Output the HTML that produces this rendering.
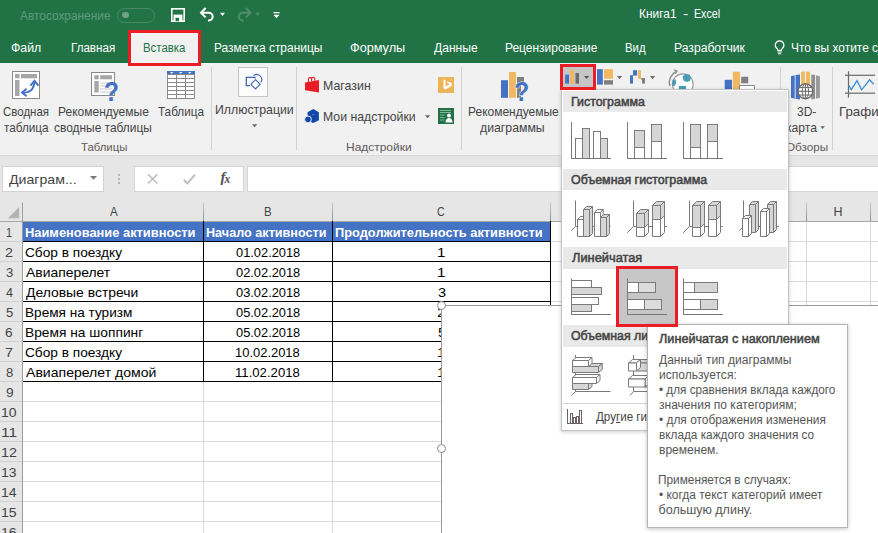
<!DOCTYPE html>
<html><head><meta charset="utf-8"><title>Excel</title>
<style>
html,body{margin:0;padding:0;}
body{width:878px;height:533px;overflow:hidden;background:#fff;font-family:'Liberation Sans',sans-serif;}
#app{position:relative;width:878px;height:533px;overflow:hidden;background:#fff;}
.t{position:absolute;white-space:nowrap;line-height:1;transform-origin:0 50%;font-family:'Liberation Sans',sans-serif;}
.a{position:absolute;}
svg{position:absolute;overflow:visible;}

</style></head>
<body>
<div id="app">
<!-- green title + tabs -->
<div class="a" style="left:0;top:0;width:878px;height:63px;background:#217346"></div>
<!-- ribbon bg -->
<div class="a" style="left:0;top:63px;width:878px;height:92px;background:#f1f1f1"></div>
<div class="a" style="left:0;top:155px;width:878px;height:1px;background:#d9d9d9"></div>
<!-- formula bar area -->
<div class="a" style="left:0;top:156px;width:878px;height:46px;background:#e6e6e6"></div>
<!-- active tab -->
<div class="a" style="left:129px;top:31px;width:71px;height:32px;background:#f1f1f1"></div>
<!-- autosave toggle -->
<div class="a" style="left:117px;top:8px;width:36px;height:13px;border:1px solid #4a8868;border-radius:8px"></div>
<div class="a" style="left:122px;top:11.500px;width:6.500px;height:6.500px;border-radius:50%;background:#6fa387"></div>
<!-- save icon -->
<svg style="left:0;top:0" width="300" height="30" viewBox="0 0 300 30"><rect x="171.800" y="8.800" width="12.400" height="12.400" fill="none" stroke="#fff" stroke-width="1.600"/><rect x="173.500" y="14.600" width="9" height="6.500" fill="#fff"/><rect x="175.500" y="17.800" width="3.500" height="3.400" fill="#217346"/></svg>
<!-- undo -->
<svg style="left:0;top:0" width="300" height="30" viewBox="0 0 300 30"><path d="M202 12.700h6.800a3.900 3.900 0 0 1 0 7.800H208" fill="none" stroke="#fff" stroke-width="2"/><path d="M205.600 8L201 12.700l4.600 4.700" fill="none" stroke="#fff" stroke-width="2"/><path d="M220 12.700h5l-2.500 3.300z" fill="#fff"/></svg>
<!-- redo (disabled) -->
<svg style="left:0;top:0" width="300" height="30" viewBox="0 0 300 30"><path d="M249.500 12.700h-6.800a3.900 3.900 0 0 0 0 7.800H243.500" fill="none" stroke="#4f8d6c" stroke-width="2"/><path d="M246 8l4.600 4.700-4.600 4.700" fill="none" stroke="#4f8d6c" stroke-width="2"/><path d="M255 12.700h5l-2.500 3.300z" fill="#4f8d6c"/></svg>
<!-- customize QAT -->
<svg style="left:0;top:0" width="300" height="30" viewBox="0 0 300 30"><rect x="273.500" y="12" width="6" height="1.300" fill="#fff"/><path d="M273.500 14.800h6l-3 3.400z" fill="#fff"/></svg>
<!-- lightbulb -->
<svg style="left:0;top:0" width="878" height="63" viewBox="0 0 878 63"><path d="M779.600 40.900a4.300 4.300 0 0 0-2.500 7.800c.5.500.7 1 .7 1.700h3.600c0-.7.200-1.200.7-1.700a4.300 4.300 0 0 0-2.500-7.800z" fill="none" stroke="#fff" stroke-width="1.150"/><path d="M777.500 52h4.200M778 53.800h3.200" stroke="#fff" stroke-width="1.100"/></svg>

<!-- ribbon separators -->
<div class="a" style="left:211px;top:67px;width:1px;height:83px;background:#d2d2d2"></div>
<div class="a" style="left:296px;top:67px;width:1px;height:83px;background:#d2d2d2"></div>
<div class="a" style="left:461px;top:67px;width:1px;height:83px;background:#d2d2d2"></div>
<div class="a" style="left:780px;top:67px;width:1px;height:83px;background:#d2d2d2"></div>
<div class="a" style="left:832px;top:67px;width:1px;height:83px;background:#d2d2d2"></div>

<!-- ICONS placeholder: ribbon -->
<svg style="left:0;top:0" width="878" height="533" viewBox="0 0 878 533"><rect x="12.50" y="71.50" width="27.00" height="27.00" fill="#fff" stroke="#8a8a8a" stroke-width="1"/>
<rect x="15.00" y="74.00" width="4.50" height="4.30" fill="#a6a6a6"/>
<rect x="15.00" y="80.00" width="4.50" height="16.00" fill="#a6a6a6"/>
<rect x="21.00" y="74.00" width="16.00" height="4.30" fill="#a6a6a6"/>
<path d="M23 92.600c6 0.600 11-2.600 11.400-11" fill="none" stroke="#4472c4" stroke-width="1.900"/>
<path d="M26.600 88.800l-4.600 3.800 4.600 3.700" fill="none" stroke="#4472c4" stroke-width="1.900"/>
<path d="M30.400 85.600l4.100-4.800 3.900 4.900" fill="none" stroke="#4472c4" stroke-width="1.900"/>
<rect x="91.50" y="72.50" width="23.00" height="23.00" fill="#fff" stroke="#8a8a8a" stroke-width="1"/>
<rect x="94.30" y="75.20" width="4.40" height="4.10" fill="#a6a6a6"/>
<rect x="94.30" y="81.00" width="4.40" height="11.50" fill="#a6a6a6"/>
<rect x="100.20" y="75.20" width="11.80" height="4.10" fill="#a6a6a6"/>
<path d="M100.20 83.00L112.00 83.00" stroke="#c8c8c8" stroke-width="1" fill="none"/>
<path d="M100.20 86.00L112.00 86.00" stroke="#c8c8c8" stroke-width="1" fill="none"/>
<path d="M100.20 89.00L112.00 89.00" stroke="#c8c8c8" stroke-width="1" fill="none"/>
<path d="M100.20 92.00L112.00 92.00" stroke="#c8c8c8" stroke-width="1" fill="none"/>
<text transform="translate(104 100.700) scale(0.860 1)" font-family="Liberation Sans" font-weight="700" font-size="28.500" fill="#4472c4">?</text>
<rect x="167.00" y="71.00" width="28.00" height="4.00" fill="#4472c4"/>
<rect x="167.50" y="74.50" width="27.00" height="24.00" fill="#fff" stroke="#8a8a8a" stroke-width="1"/>
<path d="M167.50 78.50L194.50 78.50" stroke="#8a8a8a" stroke-width="1" fill="none"/>
<path d="M167.50 82.50L194.50 82.50" stroke="#8a8a8a" stroke-width="1" fill="none"/>
<path d="M167.50 86.50L194.50 86.50" stroke="#8a8a8a" stroke-width="1" fill="none"/>
<path d="M167.50 90.50L194.50 90.50" stroke="#8a8a8a" stroke-width="1" fill="none"/>
<path d="M167.50 94.50L194.50 94.50" stroke="#8a8a8a" stroke-width="1" fill="none"/>
<path d="M176.50 74.50L176.50 98.50" stroke="#8a8a8a" stroke-width="1" fill="none"/>
<path d="M185.50 74.50L185.50 98.50" stroke="#8a8a8a" stroke-width="1" fill="none"/>
<path d="M170.1 72h3.200l-1.600 1.800z" fill="#fff"/>
<path d="M179.1 72h3.200l-1.600 1.800z" fill="#fff"/>
<path d="M188.1 72h3.200l-1.600 1.800z" fill="#fff"/>
<rect x="238.50" y="67.50" width="29.00" height="29.00" fill="#fcfcfc" stroke="#c4c4c4" stroke-width="1"/>
<path d="M255 78.600V77.300H246.300V85.600H250" fill="none" stroke="#3c65b5" stroke-width="1.300"/>
<path d="M253.500 75.700A5 5 0 0 1 260.800 82.400" fill="none" stroke="#3c65b5" stroke-width="1.100"/>
<path d="M255.500 79.700l4.600 4.600-4.600 4.600-4.600-4.600z" fill="none" stroke="#3c65b5" stroke-width="1.100"/>
<path d="M252.100 124.200h5.200l-2.600 3z" fill="#666"/>
<path d="M305 82.600L319 79.900V92.500L305 90.300z" fill="#e81c24"/>
<path d="M308.400 82v-2.800a1.600 1.600 0 0 1 3.200 0v2M311.600 81v-2.200a1.600 1.600 0 0 1 3.200 0v2" fill="none" stroke="#e81c24" stroke-width="1.100"/>
<path d="M313.200 108.900L318.900 112.300V120.200L313.200 123L307.600 120.200V112.300z" fill="#1047a9"/>
<circle cx="308" cy="119.400" r="3.400" fill="#1047a9" stroke="#f1f1f1" stroke-width="1"/>
<rect x="312.600" y="113.900" width="1.300" height="1.300" fill="#6f93d0"/>
<path d="M425 115.300h5.200l-2.600 3z" fill="#666"/>
<rect x="438.00" y="77.00" width="16.00" height="16.00" fill="#f0b458"/>
<path d="M443.500 79.500l2 .8v6.200l4.500-2.300-2.300-1-.9-2 5 1.800v2.800l-6.300 3.700-2-1.300z" fill="#fff"/>
<rect x="438.00" y="108.00" width="16.00" height="16.00" fill="#217346"/>
<circle cx="449" cy="115.500" r="2" fill="#fff"/><path d="M445.500 122.500c0-3 1.500-4.500 3.500-4.500s3.500 1.500 3.500 4.500z" fill="#fff"/>
<path d="M440.00 110.50L451.00 110.50" stroke="#9fc5ae" stroke-width="0.8" fill="none"/>
<path d="M440.00 112.50L451.00 112.50" stroke="#9fc5ae" stroke-width="0.8" fill="none"/>
<path d="M440.00 115.00L444.50 115.00" stroke="#9fc5ae" stroke-width="0.8" fill="none"/>
<path d="M440.00 117.50L444.50 117.50" stroke="#9fc5ae" stroke-width="0.8" fill="none"/>
<path d="M440.00 120.00L444.50 120.00" stroke="#9fc5ae" stroke-width="0.8" fill="none"/>
<rect x="501.00" y="80.20" width="7.00" height="17.60" fill="#4472c4"/>
<rect x="509.00" y="72.00" width="7.00" height="25.80" fill="#f0b860"/>
<rect x="517.00" y="77.00" width="7.00" height="5.00" fill="#7f7f7f"/>
<rect x="517.00" y="82.00" width="4.00" height="15.80" fill="#7f7f7f"/>
<text transform="translate(514.300 100.700) scale(0.860 1)" font-family="Liberation Sans" font-weight="700" font-size="28.500" fill="#4472c4" stroke="#f1f1f1" stroke-width="0.900" paint-order="stroke">?</text>
<rect x="561.50" y="65.50" width="33.00" height="23.00" fill="#c6c6c6"/>
<rect x="565.20" y="74.60" width="3.80" height="9.00" fill="#4472c4"/>
<rect x="570.20" y="69.80" width="3.80" height="13.80" fill="#f0b860"/>
<rect x="575.50" y="73.00" width="3.50" height="10.60" fill="#6b6b6b"/>
<path d="M584 76h5.200l-2.600 3z" fill="#555"/>
<rect x="597.00" y="69.20" width="5.80" height="15.40" fill="#4472c4"/>
<rect x="604.00" y="69.20" width="9.00" height="9.50" fill="#f0b860"/>
<rect x="604.00" y="80.20" width="9.00" height="4.40" fill="#7f7f7f"/>
<path d="M617 76h5.200l-2.600 3z" fill="#666"/>
<rect x="630.00" y="75.20" width="3.00" height="8.40" fill="#4472c4"/>
<rect x="633.00" y="70.20" width="4.10" height="5.40" fill="#4472c4"/>
<rect x="638.00" y="70.20" width="3.00" height="8.50" fill="#f0b860"/>
<rect x="641.00" y="78.00" width="4.00" height="1.50" fill="#7f7f7f"/>
<rect x="642.00" y="78.00" width="3.00" height="5.60" fill="#7f7f7f"/>
<path d="M650 76h5.200l-2.600 3z" fill="#666"/>
<circle cx="682.800" cy="84.300" r="10.400" fill="#fff" stroke="#9a9a9a" stroke-width="1.100"/>
<path d="M682.500 76.500l3-2.500 4 .5 1.500 3-1 3.500-3.500 1-3-1.500zM672.500 80l3-.8.800 3.500-1.800 3.500-2-.5zM678.800 86h7.200v3h-7.200z" fill="#4a9db5"/>
<path d="M669.900 86a12.300 12.300 0 0 1 6.300-14.600" fill="none" stroke="#8a8a8a" stroke-width="1.400"/><path d="M673.800 69.800l3.200 1.200-1.600 2.800" fill="none" stroke="#8a8a8a" stroke-width="1.200"/>
<rect x="724.70" y="79.80" width="7.30" height="12.20" fill="#4472c4"/>
<rect x="732.80" y="71.70" width="7.30" height="20.30" fill="#f0b860"/>
<rect x="741.20" y="76.80" width="7.00" height="6.50" fill="#7f7f7f"/>
<rect x="739.50" y="85.50" width="15.00" height="7.50" fill="#fff" stroke="#8a8a8a" stroke-width="1"/>
<path d="M791 76.200l3.700-1v23.600l-3.700-1z" fill="#4472c4"/><path d="M795.600 75l4.400-.6v25l-4.400-.6z" fill="#4472c4"/>
<path d="M801.100 72l3.800-.7v20h-3.800z" fill="#f0b860"/><path d="M806 71.300l4 .7v20h-4z" fill="#f0b860"/>
<path d="M811.300 74.400l3.700.6v23.800l-3.700.6z" fill="#8f8f8f"/><path d="M815.900 75.200l4 1v21.600l-4 1z" fill="#9a9a9a"/>
<circle cx="805.400" cy="91.300" r="7.400" fill="#fff" stroke="#6a6a6a" stroke-width="1.400"/>
<ellipse cx="805.400" cy="91.300" rx="3.200" ry="7.400" fill="none" stroke="#6a6a6a" stroke-width="1"/>
<path d="M805.40 84.00L805.40 98.70" stroke="#6a6a6a" stroke-width="1" fill="none"/>
<path d="M798.00 91.30L812.80 91.30" stroke="#6a6a6a" stroke-width="1.1" fill="none"/>
<path d="M799.200 87.600h12.400M799.200 95h12.400" stroke="#6a6a6a" stroke-width="1" fill="none"/>
<path d="M820.300 126.200h4.600l-2.300 2.700z" fill="#666"/>
<path d="M848.50 71.30L848.50 97.70" stroke="#6a6a6a" stroke-width="1.2" fill="none"/>
<path d="M845.00 75.30L875.00 75.30" stroke="#6a6a6a" stroke-width="1.2" fill="none"/>
<path d="M845.00 93.20L875.00 93.20" stroke="#6a6a6a" stroke-width="1.2" fill="none"/>
<path d="M848.800 85.400l2.400 4.300 5.800-9.100 4.600 9.300 8-10.100 4.100 4.500" fill="none" stroke="#3a8fd6" stroke-width="1.300"/></svg>

<!-- formula bar -->
<div class="a" style="left:2px;top:166px;width:100px;height:24px;background:#fff;border:1px solid #d2d2d2"></div>
<svg style="left:90px;top:176.300px" width="8" height="5"><path d="M0 0h7L3.500 3.800z" fill="#777"/></svg>
<div class="a" style="left:118.400px;top:174px;width:1.800px;height:1.800px;background:#b5b5b5"></div>
<div class="a" style="left:118.400px;top:178.200px;width:1.800px;height:1.800px;background:#b5b5b5"></div>
<div class="a" style="left:118.400px;top:182.400px;width:1.800px;height:1.800px;background:#b5b5b5"></div>
<div class="a" style="left:134px;top:166px;width:108px;height:24px;background:#fff;border:1px solid #d6d6d6"></div>
<svg style="left:0;top:0" width="300" height="200" viewBox="0 0 300 200"><path d="M148 174.300l9.400 9.200M157.400 174.300L148 183.500" stroke="#bdbdbd" stroke-width="1.600" fill="none"/><path d="M183.800 179.800l3.600 3.600L195 174.600" stroke="#c0c0c0" stroke-width="2.100" fill="none"/></svg>
<span class="t" style="left:220.500px;top:170px;font-family:'Liberation Serif',serif;font-style:italic;font-weight:700;font-size:15px;color:#505050">f</span>
<span class="t" style="left:224.500px;top:174px;font-family:'Liberation Serif',serif;font-style:italic;font-weight:700;font-size:11.500px;color:#505050">x</span>
<div class="a" style="left:247px;top:166px;width:640px;height:24px;background:#fff;border:1px solid #d6d6d6"></div>

<!-- column headers -->
<div class="a" style="left:0;top:202px;width:878px;height:19px;background:#e6e6e6"></div>
<svg style="left:8px;top:206.600px" width="12" height="12"><path d="M11.200 0v11.200H0z" fill="#b2b2b2"/></svg>
<!-- grid -->
<div class="a" style="left:0;top:221px;width:22px;height:312px;background:#e6e6e6"></div>
<div class="a" style="left:22px;top:202px;width:1px;height:19px;background:linear-gradient(#d0d0d0,#8c8c8c)"></div>
<div class="a" style="left:203px;top:202px;width:1px;height:19px;background:linear-gradient(#d0d0d0,#8c8c8c)"></div>
<div class="a" style="left:332px;top:202px;width:1px;height:19px;background:linear-gradient(#d0d0d0,#8c8c8c)"></div>
<div class="a" style="left:550px;top:202px;width:1px;height:19px;background:linear-gradient(#d0d0d0,#8c8c8c)"></div>
<div class="a" style="left:614px;top:202px;width:1px;height:19px;background:linear-gradient(#d0d0d0,#8c8c8c)"></div>
<div class="a" style="left:678px;top:202px;width:1px;height:19px;background:linear-gradient(#d0d0d0,#8c8c8c)"></div>
<div class="a" style="left:742px;top:202px;width:1px;height:19px;background:linear-gradient(#d0d0d0,#8c8c8c)"></div>
<div class="a" style="left:806px;top:202px;width:1px;height:19px;background:linear-gradient(#d0d0d0,#8c8c8c)"></div>
<div class="a" style="left:870px;top:202px;width:1px;height:19px;background:linear-gradient(#d0d0d0,#8c8c8c)"></div>
<div class="a" style="left:0;top:221px;width:878px;height:1px;background:#a8a8a8"></div>
<div class="a" style="left:22px;top:203px;width:1px;height:330px;background:#9c9c9c"></div>
<div class="a" style="left:0;top:241px;width:22px;height:1px;background:#cfcfcf"></div>
<div class="a" style="left:23px;top:241px;width:855px;height:1px;background:#d9d9d9"></div>
<div class="a" style="left:0;top:261px;width:22px;height:1px;background:#cfcfcf"></div>
<div class="a" style="left:23px;top:261px;width:855px;height:1px;background:#d9d9d9"></div>
<div class="a" style="left:0;top:281px;width:22px;height:1px;background:#cfcfcf"></div>
<div class="a" style="left:23px;top:281px;width:855px;height:1px;background:#d9d9d9"></div>
<div class="a" style="left:0;top:301px;width:22px;height:1px;background:#cfcfcf"></div>
<div class="a" style="left:23px;top:301px;width:855px;height:1px;background:#d9d9d9"></div>
<div class="a" style="left:0;top:321px;width:22px;height:1px;background:#cfcfcf"></div>
<div class="a" style="left:23px;top:321px;width:855px;height:1px;background:#d9d9d9"></div>
<div class="a" style="left:0;top:341px;width:22px;height:1px;background:#cfcfcf"></div>
<div class="a" style="left:23px;top:341px;width:855px;height:1px;background:#d9d9d9"></div>
<div class="a" style="left:0;top:361px;width:22px;height:1px;background:#cfcfcf"></div>
<div class="a" style="left:23px;top:361px;width:855px;height:1px;background:#d9d9d9"></div>
<div class="a" style="left:0;top:381px;width:22px;height:1px;background:#cfcfcf"></div>
<div class="a" style="left:23px;top:381px;width:855px;height:1px;background:#d9d9d9"></div>
<div class="a" style="left:0;top:401px;width:22px;height:1px;background:#cfcfcf"></div>
<div class="a" style="left:23px;top:401px;width:855px;height:1px;background:#d9d9d9"></div>
<div class="a" style="left:0;top:421px;width:22px;height:1px;background:#cfcfcf"></div>
<div class="a" style="left:23px;top:421px;width:855px;height:1px;background:#d9d9d9"></div>
<div class="a" style="left:0;top:441px;width:22px;height:1px;background:#cfcfcf"></div>
<div class="a" style="left:23px;top:441px;width:855px;height:1px;background:#d9d9d9"></div>
<div class="a" style="left:0;top:461px;width:22px;height:1px;background:#cfcfcf"></div>
<div class="a" style="left:23px;top:461px;width:855px;height:1px;background:#d9d9d9"></div>
<div class="a" style="left:0;top:481px;width:22px;height:1px;background:#cfcfcf"></div>
<div class="a" style="left:23px;top:481px;width:855px;height:1px;background:#d9d9d9"></div>
<div class="a" style="left:0;top:501px;width:22px;height:1px;background:#cfcfcf"></div>
<div class="a" style="left:23px;top:501px;width:855px;height:1px;background:#d9d9d9"></div>
<div class="a" style="left:0;top:521px;width:22px;height:1px;background:#cfcfcf"></div>
<div class="a" style="left:23px;top:521px;width:855px;height:1px;background:#d9d9d9"></div>
<div class="a" style="left:0;top:541px;width:22px;height:1px;background:#cfcfcf"></div>
<div class="a" style="left:23px;top:541px;width:855px;height:1px;background:#d9d9d9"></div>
<div class="a" style="left:203px;top:222px;width:1px;height:311px;background:#d9d9d9"></div>
<div class="a" style="left:332px;top:222px;width:1px;height:311px;background:#d9d9d9"></div>
<div class="a" style="left:550px;top:222px;width:1px;height:311px;background:#d9d9d9"></div>
<div class="a" style="left:614px;top:222px;width:1px;height:311px;background:#d9d9d9"></div>
<div class="a" style="left:678px;top:222px;width:1px;height:311px;background:#d9d9d9"></div>
<div class="a" style="left:742px;top:222px;width:1px;height:311px;background:#d9d9d9"></div>
<div class="a" style="left:806px;top:222px;width:1px;height:311px;background:#d9d9d9"></div>
<div class="a" style="left:870px;top:222px;width:1px;height:311px;background:#d9d9d9"></div>
<div class="a" style="left:23px;top:222px;width:527px;height:19px;background:#4472c4"></div>
<div class="a" style="left:23px;top:241px;width:528px;height:1px;background:#000"></div>
<div class="a" style="left:23px;top:261px;width:528px;height:1px;background:#000"></div>
<div class="a" style="left:23px;top:281px;width:528px;height:1px;background:#000"></div>
<div class="a" style="left:23px;top:301px;width:528px;height:1px;background:#000"></div>
<div class="a" style="left:23px;top:321px;width:528px;height:1px;background:#000"></div>
<div class="a" style="left:23px;top:341px;width:528px;height:1px;background:#000"></div>
<div class="a" style="left:23px;top:361px;width:528px;height:1px;background:#000"></div>
<div class="a" style="left:23px;top:381px;width:528px;height:1px;background:#000"></div>
<div class="a" style="left:203px;top:221px;width:1px;height:161px;background:#000"></div>
<div class="a" style="left:332px;top:221px;width:1px;height:161px;background:#000"></div>
<div class="a" style="left:550px;top:221px;width:1px;height:161px;background:#000"></div>

<span class="t" style="left:20.10px;top:10px;font-size:12.5px;color:#5f9a7c;transform:scaleX(0.9499);">Автосохранение</span>
<span class="t" style="left:638.75px;top:8px;font-size:12.5px;color:#fff;transform:scaleX(0.9536);">Книга1</span>
<span class="t" style="left:682.67px;top:8px;font-size:12.5px;color:#fff;transform:scaleX(1.2667);">-</span>
<span class="t" style="left:694.15px;top:8px;font-size:12.5px;color:#fff;transform:scaleX(0.8522);">Excel</span>
<span class="t" style="left:11.26px;top:42px;font-size:12.5px;color:#fff;transform:scaleX(0.9828);">Файл</span>
<span class="t" style="left:70.77px;top:42px;font-size:12.5px;color:#fff;transform:scaleX(0.9290);">Главная</span>
<span class="t" style="left:143.09px;top:42px;font-size:12.5px;color:#217346;transform:scaleX(0.9121);">Вставка</span>
<span class="t" style="left:214.04px;top:42px;font-size:12.5px;color:#fff;transform:scaleX(0.9552);">Разметка страницы</span>
<span class="t" style="left:350.24px;top:42px;font-size:12.5px;color:#fff;transform:scaleX(1.0142);">Формулы</span>
<span class="t" style="left:434.00px;top:42px;font-size:12.5px;color:#fff;transform:scaleX(0.9663);">Данные</span>
<span class="t" style="left:505.04px;top:42px;font-size:12.5px;color:#fff;transform:scaleX(0.9579);">Рецензирование</span>
<span class="t" style="left:625.09px;top:42px;font-size:12.5px;color:#fff;transform:scaleX(0.9070);">Вид</span>
<span class="t" style="left:674.03px;top:42px;font-size:12.5px;color:#fff;transform:scaleX(0.9722);">Разработчик</span>
<span class="t" style="left:790.84px;top:42px;font-size:12.5px;color:#fff;transform:scaleX(0.9550);">Что вы хотите сделать</span>
<span class="t" style="left:2.74px;top:105px;font-size:13px;color:#444;transform:scaleX(0.8832);">Сводная</span>
<span class="t" style="left:3.88px;top:121px;font-size:13px;color:#444;transform:scaleX(0.8995);">таблица</span>
<span class="t" style="left:57.78px;top:105px;font-size:13px;color:#444;transform:scaleX(0.9230);">Рекомендуемые</span>
<span class="t" style="left:54.14px;top:121px;font-size:13px;color:#444;transform:scaleX(0.9169);">сводные таблицы</span>
<span class="t" style="left:157.67px;top:105px;font-size:13px;color:#444;transform:scaleX(0.9005);">Таблица</span>
<span class="t" style="left:80.84px;top:142px;font-size:11px;color:#5f5b5a;transform:scaleX(1.0318);">Таблицы</span>
<span class="t" style="left:214.55px;top:103px;font-size:13px;color:#444;transform:scaleX(0.9465);">Иллюстрации</span>
<span class="t" style="left:322.55px;top:79px;font-size:13px;color:#444;transform:scaleX(0.9534);">Магазин</span>
<span class="t" style="left:322.56px;top:110px;font-size:13px;color:#444;transform:scaleX(0.9434);">Мои надстройки</span>
<span class="t" style="left:346.31px;top:142px;font-size:11px;color:#5f5b5a;transform:scaleX(1.0872);">Надстройки</span>
<span class="t" style="left:467.58px;top:105px;font-size:13px;color:#444;transform:scaleX(0.9220);">Рекомендуемые</span>
<span class="t" style="left:480.46px;top:121px;font-size:13px;color:#444;transform:scaleX(0.9442);">диаграммы</span>
<span class="t" style="left:796.54px;top:105px;font-size:13px;color:#444;transform:scaleX(0.9215);">3D-</span>
<span class="t" style="left:785.56px;top:121px;font-size:13px;color:#444;transform:scaleX(0.9364);">карта</span>
<span class="t" style="left:785.77px;top:142px;font-size:11px;color:#5f5b5a;transform:scaleX(1.0649);">Обзоры</span>
<span class="t" style="left:838.58px;top:105px;font-size:13px;color:#444;transform:scaleX(1.0230);">График</span>
<span class="t" style="left:9.20px;top:173px;font-size:13px;color:#444;transform:scaleX(1.0869);">Диаграм...</span>
<span class="t" style="left:109.50px;top:206px;font-size:12.5px;color:#444;transform:scaleX(0.9212);">A</span>
<span class="t" style="left:263.98px;top:206px;font-size:12.5px;color:#444;transform:scaleX(0.9185);">B</span>
<span class="t" style="left:437.06px;top:206px;font-size:12.5px;color:#444;transform:scaleX(0.8516);">C</span>
<span class="t" style="left:833.50px;top:206px;font-size:12.5px;color:#444;">H</span>
<span class="t" style="left:6.16px;top:226px;font-size:13px;color:#444;transform:scaleX(0.8364);">1</span>
<span class="t" style="left:5.33px;top:246px;font-size:13px;color:#444;transform:scaleX(1.0957);">2</span>
<span class="t" style="left:5.65px;top:266px;font-size:13px;color:#444;transform:scaleX(1.0080);">3</span>
<span class="t" style="left:5.91px;top:286px;font-size:13px;color:#444;transform:scaleX(0.9692);">4</span>
<span class="t" style="left:5.65px;top:306px;font-size:13px;color:#444;transform:scaleX(1.0080);">5</span>
<span class="t" style="left:5.36px;top:326px;font-size:13px;color:#444;transform:scaleX(1.0500);">6</span>
<span class="t" style="left:5.33px;top:346px;font-size:13px;color:#444;transform:scaleX(1.0957);">7</span>
<span class="t" style="left:5.65px;top:366px;font-size:13px;color:#444;transform:scaleX(1.0080);">8</span>
<span class="t" style="left:5.62px;top:386px;font-size:13px;color:#444;transform:scaleX(1.0500);">9</span>
<span class="t" style="left:1.22px;top:406px;font-size:13px;color:#444;transform:scaleX(1.0769);">10</span>
<span class="t" style="left:1.11px;top:426px;font-size:13px;color:#444;transform:scaleX(1.1915);">11</span>
<span class="t" style="left:1.20px;top:446px;font-size:13px;color:#444;transform:scaleX(1.0980);">12</span>
<span class="t" style="left:1.22px;top:466px;font-size:13px;color:#444;transform:scaleX(1.0769);">13</span>
<span class="t" style="left:1.22px;top:486px;font-size:13px;color:#444;transform:scaleX(1.0769);">14</span>
<span class="t" style="left:1.22px;top:506px;font-size:13px;color:#444;transform:scaleX(1.0769);">15</span>
<span class="t" style="left:1.22px;top:526px;font-size:13px;color:#444;transform:scaleX(1.0769);">16</span>
<span class="t" style="left:25.26px;top:226px;font-size:13px;color:#fff;font-weight:700;transform:scaleX(0.9898);">Наименование активности</span>
<span class="t" style="left:206.07px;top:226px;font-size:13px;color:#fff;font-weight:700;transform:scaleX(0.9718);">Начало активности</span>
<span class="t" style="left:335.06px;top:226px;font-size:13px;color:#fff;font-weight:700;transform:scaleX(0.9868);">Продолжительность активности</span>
<span class="t" style="left:24.81px;top:246px;font-size:13px;color:#000;transform:scaleX(1.0514);">Сбор в поездку</span>
<span class="t" style="left:235.71px;top:246px;font-size:13px;color:#000;transform:scaleX(0.9875);">01.02.2018</span>
<span class="t" style="left:437.04px;top:246px;font-size:13px;color:#000;transform:scaleX(1.1636);">1</span>
<span class="t" style="left:25.60px;top:266px;font-size:13px;color:#000;transform:scaleX(1.0701);">Авиаперелет</span>
<span class="t" style="left:235.71px;top:266px;font-size:13px;color:#000;transform:scaleX(0.9875);">02.02.2018</span>
<span class="t" style="left:437.04px;top:266px;font-size:13px;color:#000;transform:scaleX(1.1636);">1</span>
<span class="t" style="left:25.60px;top:286px;font-size:13px;color:#000;transform:scaleX(1.0702);">Деловые встречи</span>
<span class="t" style="left:235.71px;top:286px;font-size:13px;color:#000;transform:scaleX(0.9875);">03.02.2018</span>
<span class="t" style="left:437.64px;top:286px;font-size:13px;color:#000;transform:scaleX(1.1200);">3</span>
<span class="t" style="left:24.55px;top:306px;font-size:13px;color:#000;transform:scaleX(1.0462);">Время на туризм</span>
<span class="t" style="left:235.71px;top:306px;font-size:13px;color:#000;transform:scaleX(0.9875);">05.02.2018</span>
<span class="t" style="left:437.29px;top:306px;font-size:13px;color:#000;transform:scaleX(1.2174);">2</span>
<span class="t" style="left:24.54px;top:326px;font-size:13px;color:#000;transform:scaleX(1.0585);">Время на шоппинг</span>
<span class="t" style="left:235.71px;top:326px;font-size:13px;color:#000;transform:scaleX(0.9875);">05.02.2018</span>
<span class="t" style="left:437.64px;top:326px;font-size:13px;color:#000;transform:scaleX(1.1200);">5</span>
<span class="t" style="left:24.81px;top:346px;font-size:13px;color:#000;transform:scaleX(1.0514);">Сбор в поездку</span>
<span class="t" style="left:235.20px;top:346px;font-size:13px;color:#000;transform:scaleX(0.9953);">10.02.2018</span>
<span class="t" style="left:437.04px;top:346px;font-size:13px;color:#000;transform:scaleX(1.1636);">1</span>
<span class="t" style="left:25.60px;top:366px;font-size:13px;color:#000;transform:scaleX(1.0814);">Авиаперелет домой</span>
<span class="t" style="left:235.19px;top:366px;font-size:13px;color:#000;transform:scaleX(1.0112);">11.02.2018</span>
<span class="t" style="left:437.04px;top:366px;font-size:13px;color:#000;transform:scaleX(1.1636);">1</span>
<div class="a" style="left:441px;top:305px;width:450px;height:240px;background:#fff;border:1px solid #9a9a9a"></div>
<div class="a" style="left:436.7px;top:300.7px;width:7.600px;height:7.600px;border-radius:50%;background:#fff;border:1.200px solid #8a8a8a"></div>
<div class="a" style="left:436.7px;top:443.5px;width:7.600px;height:7.600px;border-radius:50%;background:#fff;border:1.200px solid #8a8a8a"></div>
<div id="dd">
<div class="a" style="left:561px;top:89px;width:226px;height:340px;background:#fff;border:1px solid #c3c3c3;box-shadow:0 1px 4px rgba(0,0,0,.2)"></div>
<div class="a" style="left:563px;top:91px;width:224px;height:21.400px;background:#e9e9e9"></div>
<div class="a" style="left:563px;top:169px;width:224px;height:21.400px;background:#e9e9e9"></div>
<div class="a" style="left:563px;top:247px;width:224px;height:21.600px;background:#e9e9e9"></div>
<div class="a" style="left:563px;top:325px;width:224px;height:22px;background:#e9e9e9"></div>
<div class="a" style="left:563px;top:403px;width:224px;height:1px;background:#d4d4d4"></div>
<!-- selected -->
<div class="a" style="left:617px;top:267px;width:60px;height:58.500px;background:#c6c6c6"></div>
<svg style="left:0;top:0" width="878" height="533" viewBox="0 0 878 533"><rect x="575.50" y="138.50" width="7.00" height="20.00" fill="#fff" stroke="#7a7a7a" stroke-width="1"/>
<rect x="582.50" y="128.50" width="7.00" height="30.00" fill="#d6d6d6" stroke="#7a7a7a" stroke-width="1"/>
<rect x="593.50" y="131.50" width="7.00" height="27.00" fill="#fff" stroke="#7a7a7a" stroke-width="1"/>
<rect x="600.50" y="138.50" width="7.00" height="20.00" fill="#d6d6d6" stroke="#7a7a7a" stroke-width="1"/>
<path d="M571.50 122.00L571.50 158.50" stroke="#7a7a7a" stroke-width="1" fill="none"/>
<path d="M571.00 158.50L611.00 158.50" stroke="#7a7a7a" stroke-width="1" fill="none"/>
<rect x="634.50" y="130.50" width="10.00" height="17.00" fill="#d6d6d6" stroke="#7a7a7a" stroke-width="1"/>
<rect x="634.50" y="147.50" width="10.00" height="11.00" fill="#fff" stroke="#7a7a7a" stroke-width="1"/>
<rect x="651.50" y="124.50" width="10.00" height="17.00" fill="#d6d6d6" stroke="#7a7a7a" stroke-width="1"/>
<rect x="651.50" y="141.50" width="10.00" height="17.00" fill="#fff" stroke="#7a7a7a" stroke-width="1"/>
<path d="M627.50 122.00L627.50 158.50" stroke="#7a7a7a" stroke-width="1" fill="none"/>
<path d="M627.00 158.50L667.00 158.50" stroke="#7a7a7a" stroke-width="1" fill="none"/>
<rect x="690.50" y="124.50" width="10.00" height="23.00" fill="#d6d6d6" stroke="#7a7a7a" stroke-width="1"/>
<rect x="690.50" y="147.50" width="10.00" height="11.00" fill="#fff" stroke="#7a7a7a" stroke-width="1"/>
<rect x="707.50" y="124.50" width="10.00" height="17.00" fill="#d6d6d6" stroke="#7a7a7a" stroke-width="1"/>
<rect x="707.50" y="141.50" width="10.00" height="17.00" fill="#fff" stroke="#7a7a7a" stroke-width="1"/>
<path d="M683.50 122.00L683.50 158.50" stroke="#7a7a7a" stroke-width="1" fill="none"/>
<path d="M683.00 158.50L723.00 158.50" stroke="#7a7a7a" stroke-width="1" fill="none"/>
<path d="M575.50 200.50L575.50 226.50" stroke="#7a7a7a" stroke-width="1" fill="none"/>
<path d="M575.50 226.50L610.50 226.50" stroke="#7a7a7a" stroke-width="1" fill="none"/>
<path d="M575.50 226.50L571.30 230.60" stroke="#7a7a7a" stroke-width="1" fill="none"/>
<path d="M577.50 219.50L580.20 216.50L586.20 216.50L583.50 219.50z" fill="#fff" stroke="#7a7a7a" stroke-width="1" stroke-linejoin="round"/><path d="M583.50 219.50L586.20 216.50L586.20 233.50L583.50 236.50z" fill="#fff" stroke="#7a7a7a" stroke-width="1" stroke-linejoin="round"/><path d="M577.50 219.50L583.50 219.50L583.50 236.50L577.50 236.50z" fill="#fff" stroke="#7a7a7a" stroke-width="1" stroke-linejoin="round"/>
<path d="M583.50 209.50L586.50 206.50L592.50 206.50L589.50 209.50z" fill="#d6d6d6" stroke="#7a7a7a" stroke-width="1" stroke-linejoin="round"/><path d="M589.50 209.50L592.50 206.50L592.50 233.50L589.50 236.50z" fill="#d6d6d6" stroke="#7a7a7a" stroke-width="1" stroke-linejoin="round"/><path d="M583.50 209.50L589.50 209.50L589.50 236.50L583.50 236.50z" fill="#d6d6d6" stroke="#7a7a7a" stroke-width="1" stroke-linejoin="round"/>
<path d="M594.50 212.50L597.20 209.50L603.20 209.50L600.50 212.50z" fill="#fff" stroke="#7a7a7a" stroke-width="1" stroke-linejoin="round"/><path d="M600.50 212.50L603.20 209.50L603.20 233.50L600.50 236.50z" fill="#fff" stroke="#7a7a7a" stroke-width="1" stroke-linejoin="round"/><path d="M594.50 212.50L600.50 212.50L600.50 236.50L594.50 236.50z" fill="#fff" stroke="#7a7a7a" stroke-width="1" stroke-linejoin="round"/>
<path d="M600.50 217.50L603.50 214.50L609.50 214.50L606.50 217.50z" fill="#d6d6d6" stroke="#7a7a7a" stroke-width="1" stroke-linejoin="round"/><path d="M606.50 217.50L609.50 214.50L609.50 233.50L606.50 236.50z" fill="#d6d6d6" stroke="#7a7a7a" stroke-width="1" stroke-linejoin="round"/><path d="M600.50 217.50L606.50 217.50L606.50 236.50L600.50 236.50z" fill="#d6d6d6" stroke="#7a7a7a" stroke-width="1" stroke-linejoin="round"/>
<path d="M633.50 200.50L633.50 226.50" stroke="#7a7a7a" stroke-width="1" fill="none"/>
<path d="M633.50 226.50L667.00 226.50" stroke="#7a7a7a" stroke-width="1" fill="none"/>
<path d="M633.50 226.50L627.30 232.80" stroke="#7a7a7a" stroke-width="1" fill="none"/>
<path d="M636.50 227.50L640.50 223.50L648.50 223.50L644.50 227.50z" fill="#fff" stroke="#7a7a7a" stroke-width="1" stroke-linejoin="round"/><path d="M644.50 227.50L648.50 223.50L648.50 232.50L644.50 236.50z" fill="#fff" stroke="#7a7a7a" stroke-width="1" stroke-linejoin="round"/><path d="M636.50 227.50L644.50 227.50L644.50 236.50L636.50 236.50z" fill="#fff" stroke="#7a7a7a" stroke-width="1" stroke-linejoin="round"/>
<path d="M636.50 213.50L640.50 209.50L648.50 209.50L644.50 213.50z" fill="#d6d6d6" stroke="#7a7a7a" stroke-width="1" stroke-linejoin="round"/><path d="M644.50 213.50L648.50 209.50L648.50 223.50L644.50 227.50z" fill="#d6d6d6" stroke="#7a7a7a" stroke-width="1" stroke-linejoin="round"/><path d="M636.50 213.50L644.50 213.50L644.50 227.50L636.50 227.50z" fill="#d6d6d6" stroke="#7a7a7a" stroke-width="1" stroke-linejoin="round"/>
<path d="M652.50 219.50L656.50 215.50L664.50 215.50L660.50 219.50z" fill="#fff" stroke="#7a7a7a" stroke-width="1" stroke-linejoin="round"/><path d="M660.50 219.50L664.50 215.50L664.50 232.50L660.50 236.50z" fill="#fff" stroke="#7a7a7a" stroke-width="1" stroke-linejoin="round"/><path d="M652.50 219.50L660.50 219.50L660.50 236.50L652.50 236.50z" fill="#fff" stroke="#7a7a7a" stroke-width="1" stroke-linejoin="round"/>
<path d="M652.50 205.50L656.50 201.50L664.50 201.50L660.50 205.50z" fill="#d6d6d6" stroke="#7a7a7a" stroke-width="1" stroke-linejoin="round"/><path d="M660.50 205.50L664.50 201.50L664.50 215.50L660.50 219.50z" fill="#d6d6d6" stroke="#7a7a7a" stroke-width="1" stroke-linejoin="round"/><path d="M652.50 205.50L660.50 205.50L660.50 219.50L652.50 219.50z" fill="#d6d6d6" stroke="#7a7a7a" stroke-width="1" stroke-linejoin="round"/>
<path d="M689.50 200.50L689.50 226.50" stroke="#7a7a7a" stroke-width="1" fill="none"/>
<path d="M689.50 226.50L722.60 226.50" stroke="#7a7a7a" stroke-width="1" fill="none"/>
<path d="M689.50 226.50L683.10 232.80" stroke="#7a7a7a" stroke-width="1" fill="none"/>
<path d="M692.50 227.50L696.50 223.50L704.50 223.50L700.50 227.50z" fill="#fff" stroke="#7a7a7a" stroke-width="1" stroke-linejoin="round"/><path d="M700.50 227.50L704.50 223.50L704.50 232.50L700.50 236.50z" fill="#fff" stroke="#7a7a7a" stroke-width="1" stroke-linejoin="round"/><path d="M692.50 227.50L700.50 227.50L700.50 236.50L692.50 236.50z" fill="#fff" stroke="#7a7a7a" stroke-width="1" stroke-linejoin="round"/>
<path d="M692.50 205.50L696.50 201.50L704.50 201.50L700.50 205.50z" fill="#d6d6d6" stroke="#7a7a7a" stroke-width="1" stroke-linejoin="round"/><path d="M700.50 205.50L704.50 201.50L704.50 223.50L700.50 227.50z" fill="#d6d6d6" stroke="#7a7a7a" stroke-width="1" stroke-linejoin="round"/><path d="M692.50 205.50L700.50 205.50L700.50 227.50L692.50 227.50z" fill="#d6d6d6" stroke="#7a7a7a" stroke-width="1" stroke-linejoin="round"/>
<path d="M708.50 219.50L712.50 215.50L720.50 215.50L716.50 219.50z" fill="#fff" stroke="#7a7a7a" stroke-width="1" stroke-linejoin="round"/><path d="M716.50 219.50L720.50 215.50L720.50 232.50L716.50 236.50z" fill="#fff" stroke="#7a7a7a" stroke-width="1" stroke-linejoin="round"/><path d="M708.50 219.50L716.50 219.50L716.50 236.50L708.50 236.50z" fill="#fff" stroke="#7a7a7a" stroke-width="1" stroke-linejoin="round"/>
<path d="M708.50 205.50L712.50 201.50L720.50 201.50L716.50 205.50z" fill="#d6d6d6" stroke="#7a7a7a" stroke-width="1" stroke-linejoin="round"/><path d="M716.50 205.50L720.50 201.50L720.50 215.50L716.50 219.50z" fill="#d6d6d6" stroke="#7a7a7a" stroke-width="1" stroke-linejoin="round"/><path d="M708.50 205.50L716.50 205.50L716.50 219.50L708.50 219.50z" fill="#d6d6d6" stroke="#7a7a7a" stroke-width="1" stroke-linejoin="round"/>
<path d="M743.50 200.50L743.50 226.50" stroke="#7a7a7a" stroke-width="1" fill="none"/>
<path d="M743.50 226.50L778.80 226.50" stroke="#7a7a7a" stroke-width="1" fill="none"/>
<path d="M743.50 226.50L739.20 230.60" stroke="#7a7a7a" stroke-width="1" fill="none"/>
<path d="M749.50 204.50L752.50 201.50L758.50 201.50L755.50 204.50z" fill="#d6d6d6" stroke="#7a7a7a" stroke-width="1" stroke-linejoin="round"/><path d="M755.50 204.50L758.50 201.50L758.50 229.50L755.50 232.50z" fill="#d6d6d6" stroke="#7a7a7a" stroke-width="1" stroke-linejoin="round"/><path d="M749.50 204.50L755.50 204.50L755.50 232.50L749.50 232.50z" fill="#d6d6d6" stroke="#7a7a7a" stroke-width="1" stroke-linejoin="round"/>
<path d="M767.50 204.50L770.50 201.50L776.50 201.50L773.50 204.50z" fill="#d6d6d6" stroke="#7a7a7a" stroke-width="1" stroke-linejoin="round"/><path d="M773.50 204.50L776.50 201.50L776.50 229.50L773.50 232.50z" fill="#d6d6d6" stroke="#7a7a7a" stroke-width="1" stroke-linejoin="round"/><path d="M767.50 204.50L773.50 204.50L773.50 232.50L767.50 232.50z" fill="#d6d6d6" stroke="#7a7a7a" stroke-width="1" stroke-linejoin="round"/>
<path d="M742.50 218.50L745.50 215.50L751.50 215.50L748.50 218.50z" fill="#fff" stroke="#7a7a7a" stroke-width="1" stroke-linejoin="round"/><path d="M748.50 218.50L751.50 215.50L751.50 233.50L748.50 236.50z" fill="#fff" stroke="#7a7a7a" stroke-width="1" stroke-linejoin="round"/><path d="M742.50 218.50L748.50 218.50L748.50 236.50L742.50 236.50z" fill="#fff" stroke="#7a7a7a" stroke-width="1" stroke-linejoin="round"/>
<path d="M760.50 211.50L763.50 208.50L769.50 208.50L766.50 211.50z" fill="#fff" stroke="#7a7a7a" stroke-width="1" stroke-linejoin="round"/><path d="M766.50 211.50L769.50 208.50L769.50 233.50L766.50 236.50z" fill="#fff" stroke="#7a7a7a" stroke-width="1" stroke-linejoin="round"/><path d="M760.50 211.50L766.50 211.50L766.50 236.50L760.50 236.50z" fill="#fff" stroke="#7a7a7a" stroke-width="1" stroke-linejoin="round"/>
<rect x="571.50" y="280.50" width="20.00" height="7.00" fill="#fff" stroke="#7a7a7a" stroke-width="1"/>
<rect x="571.50" y="287.50" width="30.00" height="7.00" fill="#d6d6d6" stroke="#7a7a7a" stroke-width="1"/>
<rect x="571.50" y="297.50" width="27.00" height="7.00" fill="#fff" stroke="#7a7a7a" stroke-width="1"/>
<rect x="571.50" y="304.50" width="20.00" height="7.00" fill="#d6d6d6" stroke="#7a7a7a" stroke-width="1"/>
<path d="M571.50 278.50L571.50 314.50" stroke="#7a7a7a" stroke-width="1" fill="none"/>
<path d="M571.00 314.50L611.00 314.50" stroke="#7a7a7a" stroke-width="1" fill="none"/>
<rect x="627.50" y="282.50" width="11.00" height="10.00" fill="#fff" stroke="#7a7a7a" stroke-width="1"/>
<rect x="638.50" y="282.50" width="17.00" height="10.00" fill="#dcdcdc" stroke="#7a7a7a" stroke-width="1"/>
<rect x="627.50" y="299.50" width="17.00" height="10.00" fill="#fff" stroke="#7a7a7a" stroke-width="1"/>
<rect x="644.50" y="299.50" width="17.00" height="10.00" fill="#dcdcdc" stroke="#7a7a7a" stroke-width="1"/>
<path d="M627.50 278.50L627.50 314.50" stroke="#7a7a7a" stroke-width="1" fill="none"/>
<path d="M627.00 314.50L667.00 314.50" stroke="#7a7a7a" stroke-width="1" fill="none"/>
<rect x="683.50" y="282.50" width="11.00" height="10.00" fill="#fff" stroke="#7a7a7a" stroke-width="1"/>
<rect x="694.50" y="282.50" width="23.00" height="10.00" fill="#d6d6d6" stroke="#7a7a7a" stroke-width="1"/>
<rect x="683.50" y="299.50" width="17.00" height="10.00" fill="#fff" stroke="#7a7a7a" stroke-width="1"/>
<rect x="700.50" y="299.50" width="17.00" height="10.00" fill="#d6d6d6" stroke="#7a7a7a" stroke-width="1"/>
<path d="M683.50 278.50L683.50 314.50" stroke="#7a7a7a" stroke-width="1" fill="none"/>
<path d="M683.00 314.50L723.00 314.50" stroke="#7a7a7a" stroke-width="1" fill="none"/>
<path d="M575.50 354.90L575.50 391.50" stroke="#7a7a7a" stroke-width="1" fill="none"/>
<path d="M575.50 391.50L610.50 391.50" stroke="#7a7a7a" stroke-width="1" fill="none"/>
<path d="M575.50 391.50L571.30 395.50" stroke="#7a7a7a" stroke-width="1" fill="none"/>
<path d="M572.50 383.50L576.00 380.50L592.00 380.50L588.50 383.50z" fill="#d6d6d6" stroke="#7a7a7a" stroke-width="1" stroke-linejoin="round"/><path d="M588.50 383.50L592.00 380.50L592.00 386.50L588.50 389.50z" fill="#d6d6d6" stroke="#7a7a7a" stroke-width="1" stroke-linejoin="round"/><path d="M572.50 383.50L588.50 383.50L588.50 389.50L572.50 389.50z" fill="#d6d6d6" stroke="#7a7a7a" stroke-width="1" stroke-linejoin="round"/>
<path d="M572.50 377.50L576.00 374.50L600.00 374.50L596.50 377.50z" fill="#fff" stroke="#7a7a7a" stroke-width="1" stroke-linejoin="round"/><path d="M596.50 377.50L600.00 374.50L600.00 380.50L596.50 383.50z" fill="#fff" stroke="#7a7a7a" stroke-width="1" stroke-linejoin="round"/><path d="M572.50 377.50L596.50 377.50L596.50 383.50L572.50 383.50z" fill="#fff" stroke="#7a7a7a" stroke-width="1" stroke-linejoin="round"/>
<path d="M572.50 366.50L576.30 363.50L602.30 363.50L598.50 366.50z" fill="#d6d6d6" stroke="#7a7a7a" stroke-width="1" stroke-linejoin="round"/><path d="M598.50 366.50L602.30 363.50L602.30 369.50L598.50 372.50z" fill="#d6d6d6" stroke="#7a7a7a" stroke-width="1" stroke-linejoin="round"/><path d="M572.50 366.50L598.50 366.50L598.50 372.50L572.50 372.50z" fill="#d6d6d6" stroke="#7a7a7a" stroke-width="1" stroke-linejoin="round"/>
<path d="M572.50 360.50L576.00 357.50L592.00 357.50L588.50 360.50z" fill="#fff" stroke="#7a7a7a" stroke-width="1" stroke-linejoin="round"/><path d="M588.50 360.50L592.00 357.50L592.00 363.50L588.50 366.50z" fill="#fff" stroke="#7a7a7a" stroke-width="1" stroke-linejoin="round"/><path d="M572.50 360.50L588.50 360.50L588.50 366.50L572.50 366.50z" fill="#fff" stroke="#7a7a7a" stroke-width="1" stroke-linejoin="round"/>
<path d="M633.50 354.90L633.50 391.50" stroke="#7a7a7a" stroke-width="1" fill="none"/>
<path d="M633.50 391.50L667.00 391.50" stroke="#7a7a7a" stroke-width="1" fill="none"/>
<path d="M633.50 391.50L630.00 395.50" stroke="#7a7a7a" stroke-width="1" fill="none"/>
<path d="M645.00 379.00L649.00 375.50L664.00 375.50L660.00 379.00z" fill="#d6d6d6" stroke="#7a7a7a" stroke-width="1" stroke-linejoin="round"/><path d="M660.00 379.00L664.00 375.50L664.00 383.50L660.00 387.00z" fill="#d6d6d6" stroke="#7a7a7a" stroke-width="1" stroke-linejoin="round"/><path d="M645.00 379.00L660.00 379.00L660.00 387.00L645.00 387.00z" fill="#d6d6d6" stroke="#7a7a7a" stroke-width="1" stroke-linejoin="round"/>
<path d="M628.50 379.00L632.50 375.50L649.00 375.50L645.00 379.00z" fill="#fff" stroke="#7a7a7a" stroke-width="1" stroke-linejoin="round"/><path d="M645.00 379.00L649.00 375.50L649.00 383.50L645.00 387.00z" fill="#fff" stroke="#7a7a7a" stroke-width="1" stroke-linejoin="round"/><path d="M628.50 379.00L645.00 379.00L645.00 387.00L628.50 387.00z" fill="#fff" stroke="#7a7a7a" stroke-width="1" stroke-linejoin="round"/>
<path d="M636.50 363.00L640.50 359.50L659.00 359.50L655.00 363.00z" fill="#d6d6d6" stroke="#7a7a7a" stroke-width="1" stroke-linejoin="round"/><path d="M655.00 363.00L659.00 359.50L659.00 367.50L655.00 371.00z" fill="#d6d6d6" stroke="#7a7a7a" stroke-width="1" stroke-linejoin="round"/><path d="M636.50 363.00L655.00 363.00L655.00 371.00L636.50 371.00z" fill="#d6d6d6" stroke="#7a7a7a" stroke-width="1" stroke-linejoin="round"/>
<path d="M628.50 363.00L632.50 359.50L640.50 359.50L636.50 363.00z" fill="#fff" stroke="#7a7a7a" stroke-width="1" stroke-linejoin="round"/><path d="M636.50 363.00L640.50 359.50L640.50 367.50L636.50 371.00z" fill="#fff" stroke="#7a7a7a" stroke-width="1" stroke-linejoin="round"/><path d="M628.50 363.00L636.50 363.00L636.50 371.00L628.50 371.00z" fill="#fff" stroke="#7a7a7a" stroke-width="1" stroke-linejoin="round"/>
<path d="M567.50 409.00L567.50 423.50" stroke="#6a6363" stroke-width="1" fill="none"/>
<path d="M567.00 423.50L583.00 423.50" stroke="#6a6363" stroke-width="1" fill="none"/>
<rect x="570.50" y="413.50" width="2.00" height="10.00" fill="none" stroke="#6a6363" stroke-width="1"/>
<rect x="573.50" y="417.50" width="2.00" height="6.00" fill="none" stroke="#6a6363" stroke-width="1"/>
<rect x="576.50" y="416.50" width="2.00" height="7.00" fill="none" stroke="#6a6363" stroke-width="1"/>
<rect x="579.50" y="410.50" width="2.00" height="13.00" fill="none" stroke="#6a6363" stroke-width="1"/></svg>

</div>
<span class="t" style="left:571.42px;top:96px;font-size:12px;color:#444;-webkit-text-stroke:0.5px;transform:scaleX(1.0338);">Гистограмма</span>
<span class="t" style="left:571.14px;top:174px;font-size:12px;color:#444;-webkit-text-stroke:0.5px;transform:scaleX(1.0365);">Объемная гистограмма</span>
<span class="t" style="left:571.67px;top:252px;font-size:12px;color:#444;-webkit-text-stroke:0.5px;transform:scaleX(1.0687);">Линейчатая</span>
<span class="t" style="left:571.34px;top:330px;font-size:12px;color:#444;-webkit-text-stroke:0.5px;transform:scaleX(1.0281);">Объемная линейчатая</span>
<span class="t" style="left:595.70px;top:411px;font-size:12.5px;color:#444;transform:scaleX(0.9272);">Дру<u>г</u>ие гистограммы...</span>
<div id="tt">
<div class="a" style="left:647px;top:324px;width:199px;height:202px;background:#fff;border:1px solid #b4b4b4;box-shadow:0 1px 4px rgba(0,0,0,.24)"></div>

</div>
<span class="t" style="left:659.45px;top:333px;font-size:12.5px;color:#444;-webkit-text-stroke:0.5px;transform:scaleX(1.0130);">Линейчатая с накоплением</span>
<span class="t" style="left:659.30px;top:354px;font-size:12.5px;color:#555;transform:scaleX(0.9634);">Данный тип диаграммы</span>
<span class="t" style="left:658.58px;top:369px;font-size:12.5px;color:#555;transform:scaleX(0.9620);">используется:</span>
<span class="t" style="left:658.83px;top:384px;font-size:12.5px;color:#555;transform:scaleX(0.9372);">• для сравнения вклада каждого</span>
<span class="t" style="left:659.06px;top:399px;font-size:12.5px;color:#555;transform:scaleX(0.9630);">значения по категориям;</span>
<span class="t" style="left:658.82px;top:414px;font-size:12.5px;color:#555;transform:scaleX(0.9525);">• для отображения изменения</span>
<span class="t" style="left:658.59px;top:429px;font-size:12.5px;color:#555;transform:scaleX(0.9433);">вклада каждого значения со</span>
<span class="t" style="left:658.58px;top:444px;font-size:12.5px;color:#555;transform:scaleX(0.9627);">временем.</span>
<span class="t" style="left:658.35px;top:474px;font-size:12.5px;color:#555;transform:scaleX(0.9458);">Применяется в случаях:</span>
<span class="t" style="left:658.82px;top:489px;font-size:12.5px;color:#555;transform:scaleX(0.9560);">• когда текст категорий имеет</span>
<span class="t" style="left:658.55px;top:504px;font-size:12.5px;color:#555;">большую длину.</span>
<!-- red annotation boxes (drawn on top) -->
<div class="a" style="left:128px;top:30px;width:67px;height:30px;border:3px solid #ec1c24"></div>
<div class="a" style="left:560px;top:64px;width:30px;height:20px;border:3px solid #ec1c24"></div>
<div class="a" style="left:616px;top:266px;width:56px;height:54.500px;border:3px solid #ec1c24"></div>
</div>
</body></html>
